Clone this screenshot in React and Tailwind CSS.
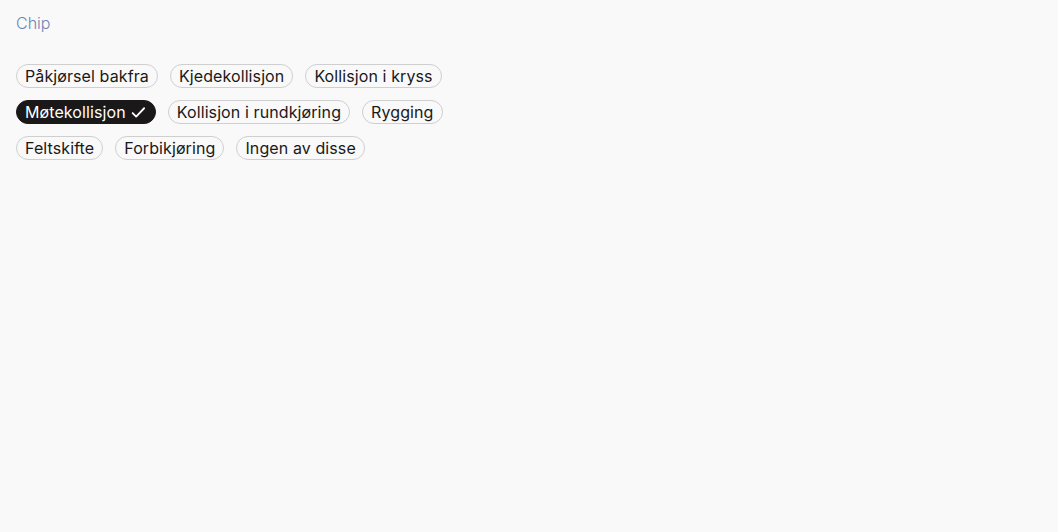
import { useState } from "react";

const rows = [
  ["Påkjørsel bakfra", "Kjedekollisjon", "Kollisjon i kryss"],
  ["Møtekollisjon", "Kollisjon i rundkjøring", "Rygging"],
  ["Feltskifte", "Forbikjøring", "Ingen av disse"],
];

function Check() {
  return (
    <svg width="17" height="17" viewBox="0 0 16 16" fill="none" className="ml-1">
      <path d="M2.5 8.5l3.3 3.3 7.5-7.8" stroke="currentColor" strokeWidth="1.7" strokeLinecap="round" strokeLinejoin="round" />
    </svg>
  );
}

function Chip({ label, selected, onClick }) {
  return (
    <button
      onClick={onClick}
      className={
        selected
          ? "flex items-center h-6 pl-2 pr-2 rounded-full border border-[#1a1818] bg-[#1a1818] text-white text-base leading-none tracking-[0.1px]"
          : "flex items-center h-6 px-2 rounded-full border border-[#cfcfcf] bg-[#f9f9f9] text-[#1a1818] text-base leading-none tracking-[0.1px]"
      }
    >
      {label}
      {selected && <Check />}
    </button>
  );
}

export default function App() {
  const [selected, setSelected] = useState(["Møtekollisjon"]);

  const toggle = (label) =>
    setSelected((prev) => (prev.includes(label) ? prev.filter((l) => l !== label) : [...prev, label]));

  return (
    <div className="min-h-screen bg-[#f9f9f9] px-4 pt-[13px] font-['Inter',sans-serif]">
      <p className="text-base leading-5 text-[#6a86b6] font-light">Chip</p>
      <div className="mt-[31px] flex flex-col gap-3">
        {rows.map((row, i) => (
          <div key={i} className="flex gap-3">
            {row.map((label) => (
              <Chip key={label} label={label} selected={selected.includes(label)} onClick={() => toggle(label)} />
            ))}
          </div>
        ))}
      </div>
    </div>
  );
}
